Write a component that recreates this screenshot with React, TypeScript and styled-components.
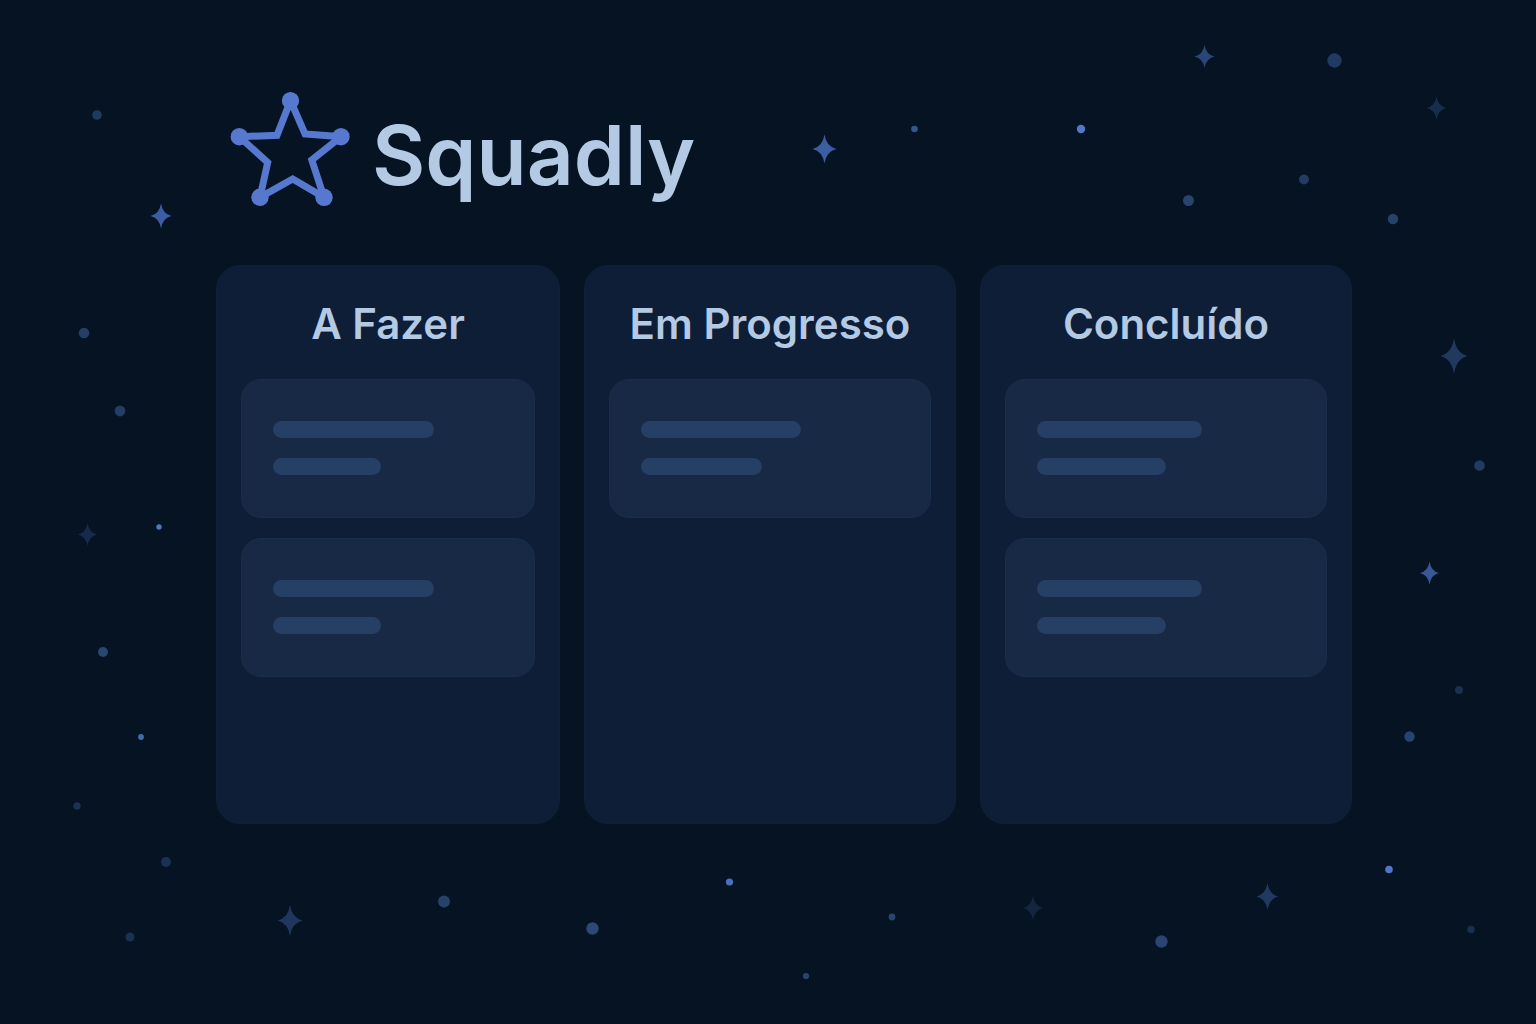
import React from 'react';
import styled, { createGlobalStyle } from 'styled-components';

const GlobalStyle = createGlobalStyle`
  *, *::before, *::after { box-sizing: border-box; }
  body {
    margin: 0;
    background: #051323;
    color: #b3c9e4;
    font-family: Inter, "Liberation Sans", sans-serif;
  }
`;

const Page = styled.div`
  position: relative;
  display: flex;
  flex-direction: column;
  min-height: 100vh;
  padding: 92px 184px 200px 216px;
`;

const Sky = styled.svg`
  position: absolute;
  inset: 0;
  width: 100%;
  height: 100%;
  pointer-events: none;
`;

const Header = styled.header`
  position: relative;
  display: flex;
  align-items: flex-start;
  gap: 22px;
  margin-bottom: 57px;
  padding-left: 14px;
`;

const Logo = styled.svg`
  flex: none;
  width: 120px;
  height: 116px;
`;

const Brand = styled.h1`
  margin: 0;
  padding-top: 14px;
  font-size: 82px;
  font-weight: 560;
  line-height: 100px;
`;

const Board = styled.main`
  position: relative;
  flex: 1;
  display: grid;
  grid-template-columns: 344fr 372fr 372fr;
  gap: 24px;
`;

const Column = styled.section`
  display: flex;
  flex-direction: column;
  gap: 20px;
  padding: 32px 24px;
  border: 1px solid #0f2139;
  border-radius: 24px;
  background: #0d1e36;
`;

const ColumnTitle = styled.h2`
  margin: 0 0 9px;
  font-size: 42px;
  font-weight: 560;
  line-height: 52px;
  text-align: center;
  white-space: nowrap;
`;

const Card = styled.article`
  display: flex;
  flex-direction: column;
  gap: 20px;
  padding: 41px 31px 42px;
  border: 1px solid #1a2d4a;
  border-radius: 20px;
  background: #172945;
`;

const Line = styled.div<{ $width: number }>`
  width: ${({ $width }) => $width}%;
  height: 17px;
  border-radius: 9px;
  background: #263f65;
`;

type ColumnData = { title: string; cards: number[][] };

const columns: ColumnData[] = [
  { title: 'A Fazer', cards: [[70, 47], [70, 47]] },
  { title: 'Em Progresso', cards: [[62, 47]] },
  { title: 'Concluído', cards: [[64, 50], [64, 50]] },
];

// x, y, radius, colour
const dots: [number, number, number, string][] = [
  [97, 115, 4.8, '#203a5c'],
  [84, 333, 5.3, '#233f66'],
  [120, 411, 5.4, '#233d65'],
  [159, 527, 2.7, '#5075c6'],
  [103, 652, 5, '#2b4673'],
  [141, 737, 2.9, '#4467b0'],
  [77, 806, 3.7, '#1c3250'],
  [166, 862, 5, '#1b3152'],
  [130, 937, 4.5, '#1b3150'],
  [444, 901.5, 6, '#27426a'],
  [592.5, 928.5, 6.2, '#2d4872'],
  [729.5, 882, 3.6, '#4b6fc0'],
  [806, 976, 3.1, '#28446f'],
  [892, 917, 3.4, '#2a446e'],
  [914.5, 129, 3.3, '#37558c'],
  [1081, 129, 4.2, '#5278c8'],
  [1188.5, 200.5, 5.5, '#284370'],
  [1304, 179.5, 5, '#223c62'],
  [1334.5, 60.5, 7.2, '#203a61'],
  [1393, 219, 5.2, '#264269'],
  [1479.5, 465.5, 5.3, '#223b61'],
  [1459, 690, 4, '#1b304d'],
  [1409.5, 736.5, 5.2, '#28446e'],
  [1389, 869.5, 3.8, '#5075c8'],
  [1471, 929.5, 3.7, '#1a304e'],
  [1161.5, 941.5, 6.2, '#2b4570'],
];

// x, y, half width, half height, colour
const sparkles: [number, number, number, number, string][] = [
  [161, 216, 10.5, 12.5, '#3c5da3'],
  [824.5, 149, 12, 14.5, '#3c5d9f'],
  [1204.5, 56.5, 10, 11.5, '#29467a'],
  [1436.5, 108, 10, 11.5, '#182c4b'],
  [1454, 356, 13.5, 18, '#22395f'],
  [1429.5, 573, 9.5, 11.5, '#375797'],
  [87.5, 534.5, 9.5, 11.5, '#172b49'],
  [290, 920.5, 12.5, 15.5, '#20375d'],
  [1033, 908, 10, 12.5, '#14263f'],
  [1267.5, 896.5, 11, 13.5, '#213961'],
];

// Four-pointed star with concave sides.
const sparklePath = (x: number, y: number, w: number, h: number) => {
  const cx = w * 0.16;
  const cy = h * 0.16;
  return [
    `M${x} ${y - h}`,
    `Q${x + cx} ${y - cy} ${x + w} ${y}`,
    `Q${x + cx} ${y + cy} ${x} ${y + h}`,
    `Q${x - cx} ${y + cy} ${x - w} ${y}`,
    `Q${x - cx} ${y - cy} ${x} ${y - h}Z`,
  ].join('');
};

const nodes = [[60.5, 8.7], [111, 44.7], [94, 105.3], [30, 105.3], [9.3, 44.7]];

export default function App() {
  return (
    <>
      <GlobalStyle />
      <Page>
        <Sky viewBox="0 0 1536 1024" preserveAspectRatio="xMidYMid slice" aria-hidden="true">
          {dots.map(([x, y, r, fill]) => (
            <circle key={`${x}-${y}`} cx={x} cy={y} r={r} fill={fill} />
          ))}
          {sparkles.map(([x, y, w, h, fill]) => (
            <path key={`${x}-${y}`} d={sparklePath(x, y, w, h)} fill={fill} />
          ))}
        </Sky>
        <Header>
          <Logo viewBox="0 0 120 116" aria-hidden="true">
            <path
              d="M60.5 8.7 75 42 111 44.7 81.8 68 94 105.3 62.7 87 30 105.3 37.7 70.5 9.3 44.7 47 43.3Z"
              fill="none"
              stroke="#5679cf"
              strokeWidth="7"
            />
            {nodes.map(([x, y]) => (
              <circle key={`${x}-${y}`} cx={x} cy={y} r="8.7" fill="#5679cf" />
            ))}
          </Logo>
          <Brand>Squadly</Brand>
        </Header>
        <Board>
          {columns.map(({ title, cards }) => (
            <Column key={title}>
              <ColumnTitle>{title}</ColumnTitle>
              {cards.map((lines, card) => (
                <Card key={card}>
                  {lines.map((width, line) => (
                    <Line key={line} $width={width} />
                  ))}
                </Card>
              ))}
            </Column>
          ))}
        </Board>
      </Page>
    </>
  );
}
